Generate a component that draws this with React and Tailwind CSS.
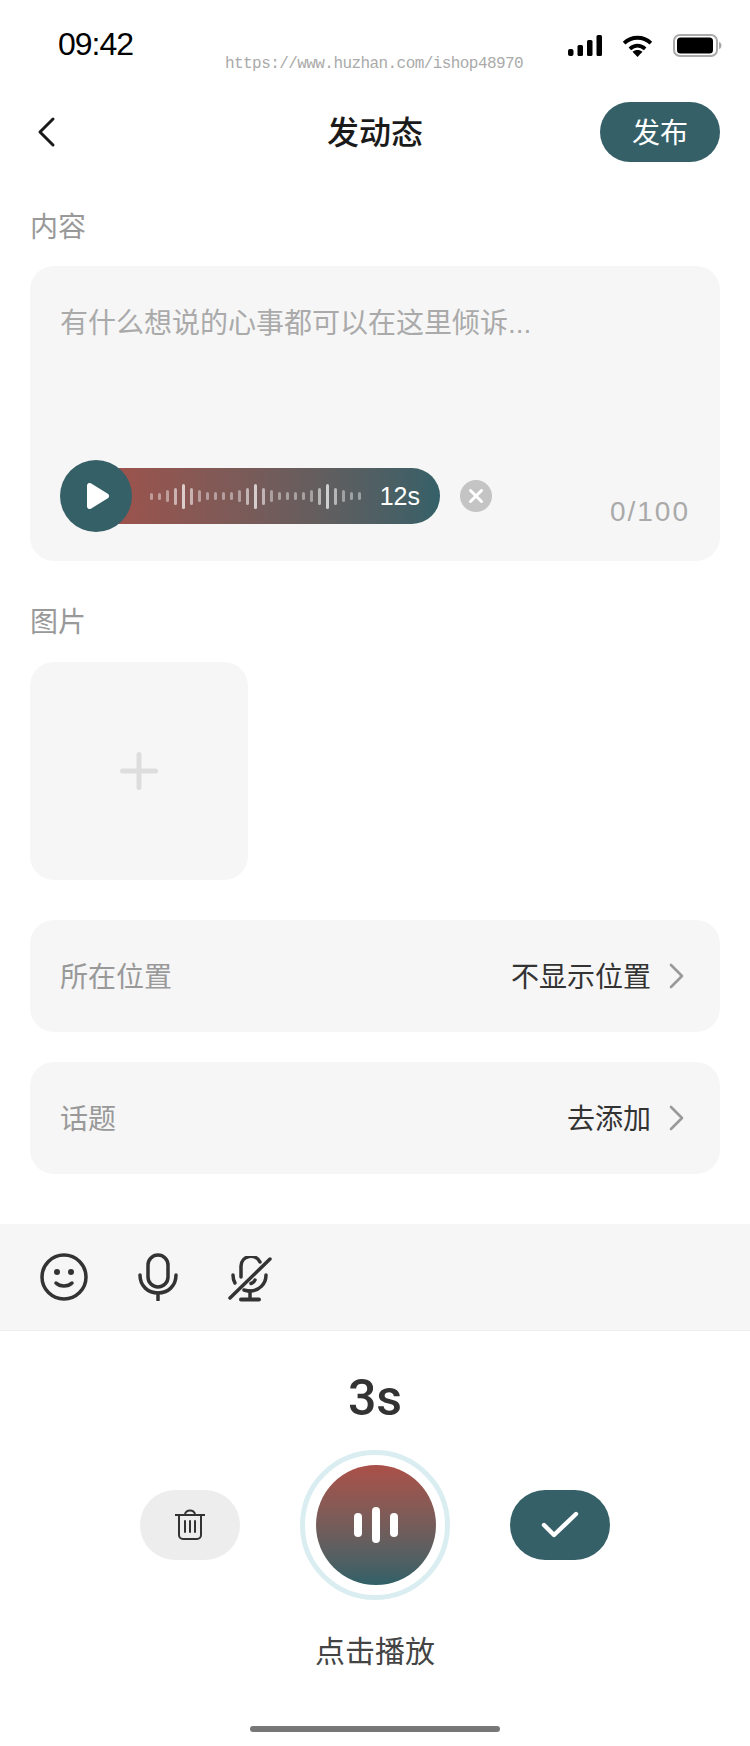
const bars = [7,7,12,17,25,17,12,8,8,8,8,12,17,25,17,12,8,8,8,8,12,17,25,17,12,8,8];

function Chevron() {
  return (
    <svg width="18" height="28" viewBox="0 0 18 28" fill="none">
      <path d="M3 3l11 11-11 11" stroke="#999" strokeWidth="2.6" strokeLinecap="round" strokeLinejoin="round" />
    </svg>
  );
}

function Row({ label, value }) {
  return (
    <div className="flex h-[112px] items-center justify-between rounded-[24px] bg-[#f6f6f6] pl-[30px] pr-[34px]">
      <span className="pt-[3px] text-[28px] leading-[40px] text-[#999999]">{label}</span>
      <div className="flex items-center gap-[17px]">
        <span className="pt-[3px] text-[28px] leading-[40px] text-[#333333]">{value}</span>
        <Chevron />
      </div>
    </div>
  );
}

export default function App() {
  return (
    <div className="flex h-[1746px] w-[750px] flex-col overflow-hidden bg-white font-['Liberation_Sans','Noto_Sans_CJK_SC',sans-serif]">
      {/* status bar */}
      <div className="relative flex h-[88px] shrink-0 items-start justify-between pl-[58px] pr-[28px] pt-[26px]">
        <span className="text-[32px] leading-[36px] tracking-[-1px] text-black">09:42</span>
        <span className="absolute left-[225px] top-[53px] font-['Liberation_Mono',monospace] text-[16px] leading-[22px] tracking-[-0.57px] text-[#aaaaaa]">https://www.huzhan.com/ishop48970</span>
        <div className="flex items-center gap-[20px] pt-[8px]">
          <svg width="34" height="21" viewBox="0 0 34 21" fill="#000">
            <rect x="0" y="14" width="5.500" height="7" rx="2" />
            <rect x="9.500" y="10" width="5.500" height="11" rx="1.500" />
            <rect x="19" y="5" width="5.500" height="16" rx="1.500" />
            <rect x="28.500" y="0" width="5.500" height="21" rx="1.500" />
          </svg>
          <svg width="31" height="22" viewBox="0 0 32 23" fill="none" stroke="#000" strokeWidth="4">
            <path d="M2 8.500c8-7.500 20-7.500 28 0" />
            <path d="M8 14.500c5-4.500 11-4.500 16 0" />
            <path d="M16 23l-5.200-5.500c3-2.500 7.400-2.500 10.400 0z" fill="#000" stroke="none" />
          </svg>
          <svg width="49" height="23" viewBox="0 0 49 23" fill="none">
            <rect x="1" y="1" width="43" height="21" rx="6" stroke="#aaa" strokeWidth="2" />
            <rect x="4" y="3.500" width="36" height="16" rx="3.500" fill="#000" />
            <path d="M46 8c2 .6 2.500 2 2.500 3.500S48 14.400 46 15z" fill="#aaa" />
          </svg>
        </div>
      </div>

      {/* nav */}
      <div className="relative mt-[14px] flex h-[60px] shrink-0 items-center justify-between px-[30px]">
        <svg width="22" height="32" viewBox="0 0 22 32" fill="none" className="ml-[7px]">
          <path d="M16 3L3 16l13 13" stroke="#1a1a1a" strokeWidth="3" strokeLinecap="round" strokeLinejoin="round" />
        </svg>
        <span className="absolute left-0 right-0 pt-[1px] text-center text-[32px] font-medium leading-[44px] text-[#1a1a1a]">发动态</span>
        <button className="flex h-[60px] w-[120px] items-center justify-center rounded-full bg-[#356068] pt-[3px] text-[28px] text-white">发布</button>
      </div>

      <div className="flex flex-col px-[30px]">
        <div className="mt-[46px] text-[28px] leading-[40px] text-[#999999]">内容</div>
        <div className="mt-[18px] flex h-[295px] flex-col justify-between rounded-[24px] bg-[#f6f6f6] px-[30px] pb-[29px] pt-[38px]">
          <div className="text-[28px] leading-[40px] text-[#aaaaaa]">有什么想说的心事都可以在这里倾诉...</div>
          <div className="flex items-end justify-between">
            <div className="flex items-center">
              <div className="relative flex h-[72px] w-[380px] items-center">
                <div className="absolute left-[20px] right-0 flex h-[56px] items-center justify-end rounded-full bg-gradient-to-r from-[#a64f48] to-[#356068] pr-[20px]">
                  <span className="text-[25px] leading-[32px] text-white">12s</span>
                </div>
                <div className="absolute left-[90px] flex h-[26px] items-center gap-[5px]">
                  {bars.map((h, i) => (
                    <span key={i} className="w-[3px] rounded-full bg-white" style={{ height: `${h}px`, opacity: h === 25 ? 0.7 : h === 17 ? 0.55 : 0.42 }} />
                  ))}
                </div>
                <div className="relative flex h-[72px] w-[72px] items-center justify-center rounded-full bg-[#356068]">
                  <svg width="24" height="28" viewBox="0 0 24 28" className="ml-[2px]">
                    <path d="M3 3.500v21a1.500 1.500 0 0 0 2.300 1.300l17-10.500a1.500 1.500 0 0 0 0-2.600l-17-10.500A1.500 1.500 0 0 0 3 3.500z" fill="#fff" stroke="#fff" strokeWidth="2" strokeLinejoin="round" />
                  </svg>
                </div>
              </div>
              <div className="ml-[20px] flex h-[32px] w-[32px] items-center justify-center rounded-full bg-[#c4c4c4]">
                <svg width="16" height="16" viewBox="0 0 16 16" fill="none">
                  <path d="M2.500 2.500l11 11M13.500 2.500l-11 11" stroke="#fff" strokeWidth="3" strokeLinecap="round" />
                </svg>
              </div>
            </div>
            <span className="mb-[2px] text-[28px] leading-[36px] tracking-[2px] text-[#aaaaaa]">0/100</span>
          </div>
        </div>

        <div className="mt-[42px] text-[28px] leading-[40px] text-[#999999]">图片</div>
        <div className="mt-[19px] flex h-[218px] w-[218px] items-center justify-center rounded-[24px] bg-[#f6f6f6]">
          <svg width="38" height="38" viewBox="0 0 38 38">
            <rect x="0" y="16.500" width="38" height="5" rx="2.500" fill="#dddddd" />
            <rect x="16.500" y="0" width="5" height="38" rx="2.500" fill="#dddddd" />
          </svg>
        </div>

        <div className="mt-[40px] flex flex-col gap-[30px]">
          <Row label="所在位置" value="不显示位置" />
          <Row label="话题" value="去添加" />
        </div>
      </div>

      {/* toolbar */}
      <div className="mt-[50px] flex h-[107px] shrink-0 items-center gap-[50px] border-b border-[#f0f0f0] bg-[#f6f6f6] pl-[40px]">
        <svg width="48" height="48" viewBox="0 0 48 48" fill="none" stroke="#333" strokeWidth="3.500" strokeLinecap="round">
          <circle cx="24" cy="24" r="22" />
          <circle cx="17" cy="19" r="3" fill="#333" stroke="none" />
          <circle cx="31" cy="19" r="3" fill="#333" stroke="none" />
          <path d="M16 30c4 4 12 4 16 0" />
        </svg>
        <svg width="40" height="48" viewBox="0 0 40 48" fill="none" stroke="#333" strokeWidth="3.500" strokeLinecap="round">
          <rect x="10" y="2" width="20" height="32" rx="10" />
          <path d="M2 22c0 11 8 18 18 18s18-7 18-18" />
          <path d="M20 40v7" />
        </svg>
        <svg width="44" height="46" viewBox="0 0 44 46" fill="none" stroke="#333" strokeWidth="3.500" strokeLinecap="round" className="mt-[4px]">
          <path d="M13 21V10a10 10 0 0 1 19-4" />
          <path d="M27 24c-1 2-2.500 3-4 3.500" />
          <path d="M5 19c0 3 .8 6 2 8" />
          <path d="M38 19c0 9-7 16-16 16-2.500 0-4-.5-6-1" />
          <path d="M22 35v8" />
          <path d="M13 43.500h18" strokeWidth="4" />
          <path d="M2 42L42 3" />
        </svg>
      </div>

      {/* recorder */}
      <div className="flex flex-col items-center">
        <div className="mt-[38px] font-['Roboto',sans-serif] text-[50px] font-medium leading-[58px] text-[#333333]">3s</div>
        <div className="mt-[23px] flex items-center justify-center">
          <button className="flex h-[70px] w-[100px] items-center justify-center rounded-full bg-[#ededed]">
            <svg width="30" height="32" viewBox="0 0 30 32" fill="none" stroke="#333" strokeWidth="2" strokeLinecap="round">
              <path d="M0 6h30" />
              <path d="M10 6c0-6 10-6 10 0" />
              <path d="M4 6v20a4 4 0 0 0 4 4h14a4 4 0 0 0 4-4V6" />
              <path d="M10 12v11M15 12v11M20 12v11" />
            </svg>
          </button>
          <div className="mx-[60px] flex h-[150px] w-[150px] items-center justify-center rounded-full border-[5px] border-[#daeef1]">
            <div className="ml-[2px] flex h-[120px] w-[120px] shrink-0 items-center justify-center gap-[10px] rounded-full bg-gradient-to-b from-[#aa5048] to-[#2f6068]">
              <span className="h-[24px] w-[8px] rounded-full bg-white" />
              <span className="h-[36px] w-[8px] rounded-full bg-white" />
              <span className="h-[24px] w-[8px] rounded-full bg-white" />
            </div>
          </div>
          <button className="flex h-[70px] w-[100px] items-center justify-center rounded-full bg-[#356068]">
            <svg width="38" height="28" viewBox="0 0 38 28" fill="none">
              <path d="M3 14l10 10L35 3" stroke="#fff" strokeWidth="4.400" strokeLinecap="round" strokeLinejoin="round" />
            </svg>
          </button>
        </div>
        <div className="mt-[32px] text-[30px] leading-[40px] text-[#444444]">点击播放</div>
        <div className="mt-[54px] h-[6px] w-[250px] rounded-full bg-[#777777]" />
      </div>
    </div>
  );
}
